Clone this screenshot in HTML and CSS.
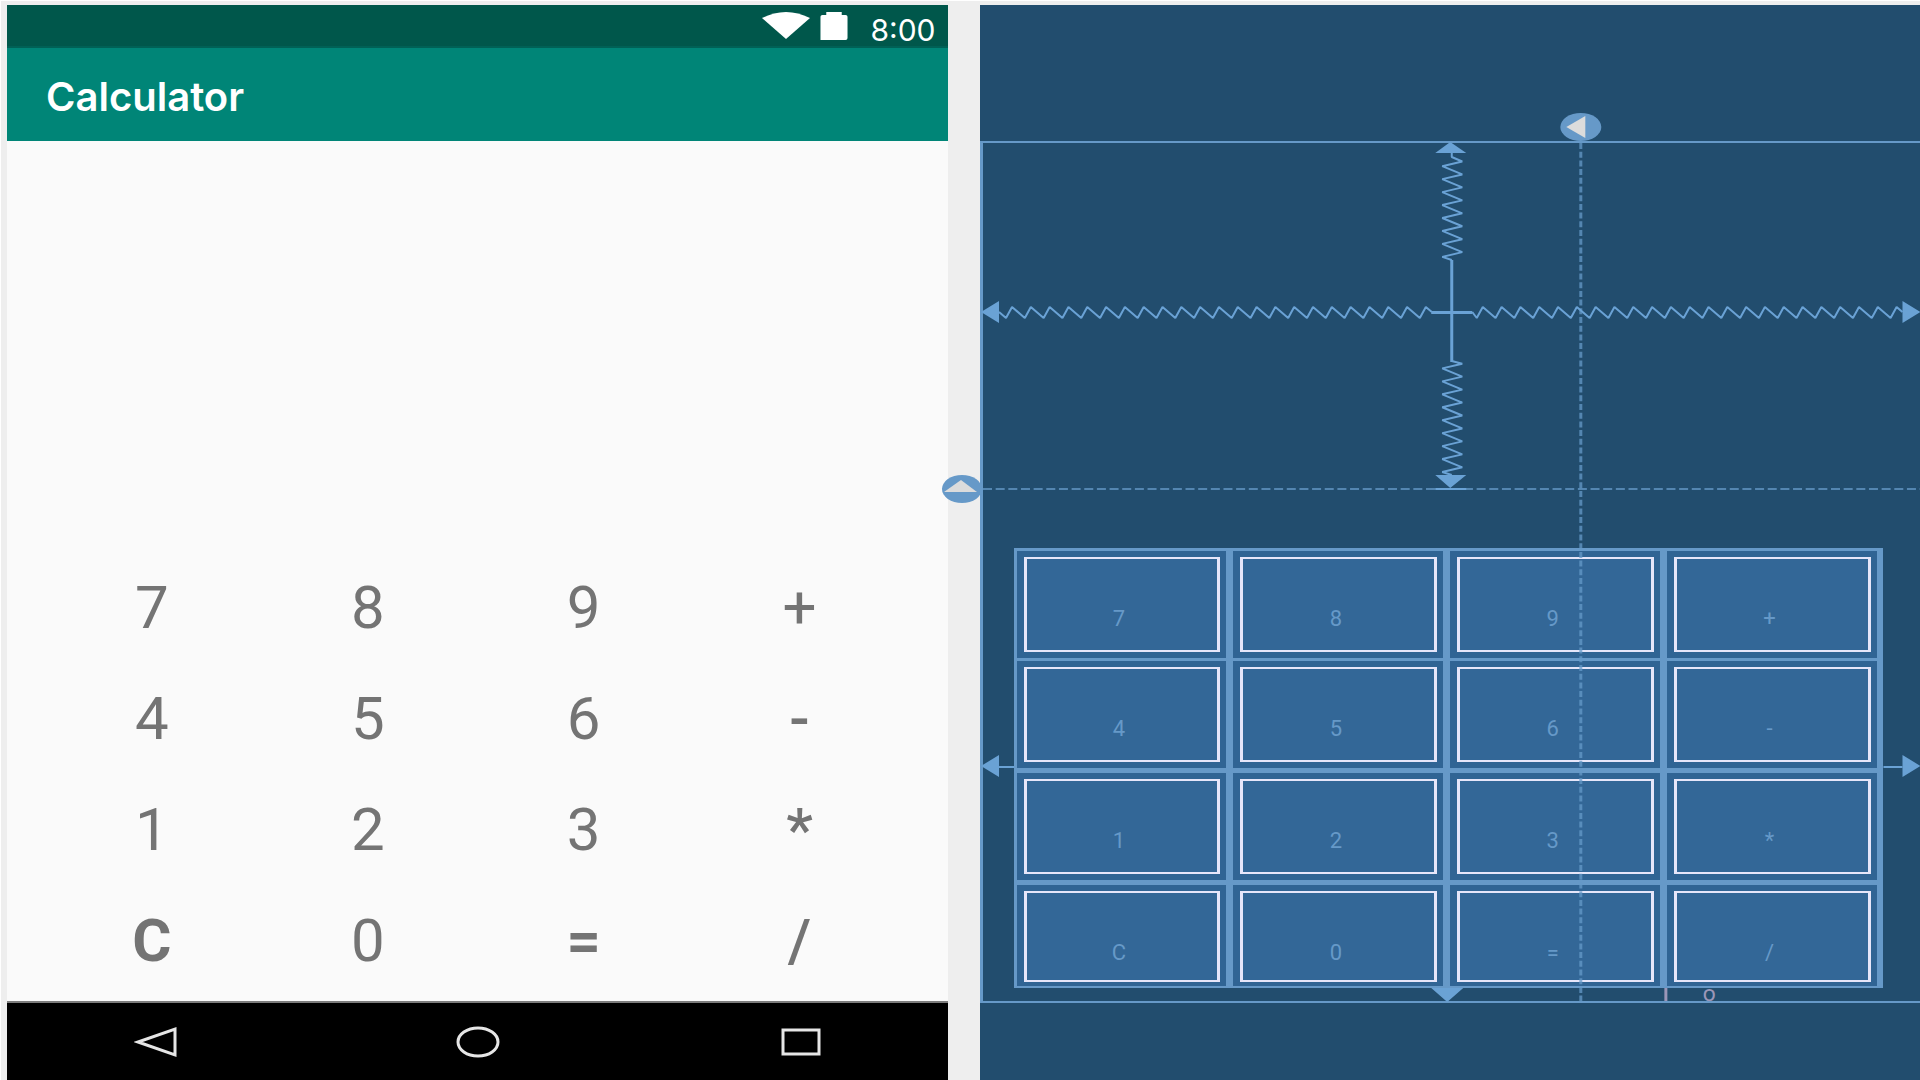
FILE: index.html
```html
<!DOCTYPE html>
<html lang="en">
<head>
<meta charset="utf-8">
<meta name="viewport" content="width=device-width, initial-scale=1">
<title>Calculator</title>
<link rel="stylesheet" href="styles.css">
</head>
<body>
<main class="editor">
  <section class="phone" aria-label="Design preview">
    <div class="status-bar">
      <svg class="wifi" viewBox="0 0 50 27" preserveAspectRatio="none" aria-hidden="true"><path d="M0 6Q25-6 50 6L25 27Z"/></svg>
      <svg class="battery" viewBox="0 0 28 29" aria-hidden="true"><path d="M6 0H22V3H26Q28 3 28 5V27Q28 29 26 29H0V5Q0 3 2 3H6Z"/></svg>
      <span class="clock">8:00</span>
    </div>
    <header class="app-bar"><h1 class="app-title">Calculator</h1></header>
    <div class="screen">
      <div class="keypad">
        <button class="key">7</button><button class="key">8</button><button class="key">9</button><button class="key">+</button>
        <button class="key">4</button><button class="key">5</button><button class="key">6</button><button class="key key-medium">-</button>
        <button class="key">1</button><button class="key">2</button><button class="key">3</button><button class="key key-medium">*</button>
        <button class="key key-bold">C</button><button class="key">0</button><button class="key key-bold">=</button><button class="key key-medium">/</button>
      </div>
    </div>
    <nav class="nav-bar" aria-label="System navigation">
      <button class="nav-button" aria-label="Back"><svg viewBox="0 0 44 32"><path d="M41 3V29L4 16Z"/></svg></button>
      <button class="nav-button" aria-label="Home"><svg viewBox="0 0 44 32"><ellipse cx="22" cy="16" rx="20" ry="14"/></svg></button>
      <button class="nav-button" aria-label="Overview"><svg viewBox="0 0 44 32"><path d="M4 4H40V28H4Z"/></svg></button>
    </nav>
  </section>

  <section class="blueprint" aria-label="Blueprint">
    <div class="surface">
      <div class="blocks">
        <div class="block"><span class="face">7</span></div><div class="block"><span class="face">8</span></div><div class="block"><span class="face">9</span></div><div class="block"><span class="face">+</span></div>
        <div class="block wide-gap"><span class="face">4</span></div><div class="block wide-gap"><span class="face">5</span></div><div class="block wide-gap"><span class="face">6</span></div><div class="block wide-gap"><span class="face">-</span></div>
        <div class="block wide-gap"><span class="face">1</span></div><div class="block wide-gap"><span class="face">2</span></div><div class="block wide-gap"><span class="face">3</span></div><div class="block wide-gap"><span class="face">*</span></div>
        <div class="block last-row"><span class="face">C</span></div><div class="block last-row"><span class="face">0</span></div><div class="block last-row"><span class="face">=</span></div><div class="block last-row"><span class="face">/</span></div>
      </div>
      <svg class="constraints" viewBox="0 0 940 862" preserveAspectRatio="none" aria-hidden="true">
        <!-- guidelines -->
        <path class="guide" stroke-width="3" stroke-dasharray="6 2.7" d="M600.5 2V860"/>
        <path class="guide" stroke-width="2" stroke-dasharray="9 3.65" d="M3 348H940"/>
        <ellipse class="badge" cx="600.5" cy="-14" rx="20.5" ry="14"/>
        <path class="badge-arrow" d="M586-14L605-25V-3Z"/>
        <ellipse class="badge" cx="-18" cy="348" rx="20" ry="14"/>
        <path class="badge-arrow" d="M-36 351L-19 339L-3 351Z"/>
        <!-- horizontal springs -->
        <path class="spring" d="M19 171L26 177l6-11 12.8 11 6-11 12.8 11 6-11 12.8 11 6-11 12.8 11 6-11 12.8 11 6-11 12.8 11 6-11 12.8 11 6-11 12.8 11 6-11 12.8 11 6-11 12.8 11 6-11 12.8 11 6-11 12.8 11 6-11 12.8 11 6-11 12.8 11 6-11 12.8 11 6-11 12.8 11 6-11 12.8 11 6-11 12.8 11 6-11 12.8 11 6-11 12.8 11 6-11 12.8 11 6-11 12.8 11 6-11 6 5"/>
        <path class="spring" d="M492 171l4.500 6 6-11 12.8 11 6-11 12.8 11 6-11 12.8 11 6-11 12.8 11 6-11 12.8 11 6-11 12.8 11 6-11 12.8 11 6-11 12.8 11 6-11 12.8 11 6-11 12.8 11 6-11 12.8 11 6-11 12.8 11 6-11 12.8 11 6-11 12.8 11 6-11 12.8 11 6-11 12.8 11 6-11 12.8 11 6-11 12.8 11 6-11 12.8 11 6-11 12.8 11 6-11 12.8 11 6-11 12.8 11 6-11L922 171"/>
        <!-- vertical springs -->
        <path class="spring" d="M471.500 12V16L482 20.500l-20 4.700 20 8.250-20 4.700 20 8.250-20 4.700 20 8.250-20 4.700 20 8.250-20 4.700 20 8.250-20 4.700 20 8.250-20 4.700 20 8.250-20 4.700L471.500 119"/>
        <path class="spring" d="M471.500 220L482 222.700l-20 4.700 20 8.250-20 4.700 20 8.250-20 4.700 20 8.250-20 4.700 20 8.250-20 4.700 20 8.250-20 4.700 20 8.250-20 4.700 20 8.250-20 4.700 20 8.250-20 4.700L471.500 334"/>
        <path class="line" stroke-width="3" d="M471.500 119V221M451 171.500H492"/>
        <path class="line" stroke-width="2" d="M455 348H486M19 626H34M903 626H922"/>
        <!-- anchors -->
        <path class="anchor" d="M470 1L486 12H455ZM470 347L486 334H455ZM1 171L19 160V182ZM940 171L922 160V182ZM1 625L19 614V636ZM940 625L922 614V636ZM467 861L483 847H451Z"/>
        <path class="stray" d="M685.500 847V860"/>
        <text class="stray-text" x="722" y="860">o</text>
      </svg>
    </div>
  </section>
</main>
</body>
</html>
```
FILE: styles.css
```css
*, *::before, *::after { box-sizing: border-box; }

:root {
  --line: #6699c8;
  --anchor: #6aa2d5;
  --paper: #224d6e;
}

body {
  margin: 0;
  font-family: Roboto, "Liberation Sans", sans-serif;
  background: #eeeeee;
}

button {
  margin: 0;
  padding: 0;
  border: 0;
  background: none;
  color: inherit;
  font: inherit;
}

.editor {
  display: grid;
  grid-template-columns: 1fr 1fr;
  gap: 32px;
  min-height: 100vh;
  padding: 4px 0 0 6px;
  border-top: 1px solid #ffffff;
  border-left: 1px solid #ffffff;
  overflow: hidden;
}

.phone, .blueprint {
  display: flex;
  flex-direction: column;
}

.phone { background: #fafafa; }

.status-bar {
  display: flex;
  align-items: center;
  justify-content: flex-end;
  gap: 10px;
  height: 43px;
  padding-right: 12px;
  background: #00574b;
  border-bottom: 2px solid #006156;
  color: #ffffff;
  fill: #ffffff;
}

.wifi { width: 48px; height: 27px; }
.battery { width: 28px; height: 28px; }

.clock {
  width: 78px;
  padding-top: 8px;
  font-family: Inter, Roboto, sans-serif;
  font-size: 30px;
  line-height: 32px;
  text-align: right;
}

.app-bar {
  display: flex;
  align-items: center;
  height: 93px;
  padding: 4px 0 0 39px;
  background: #008577;
  color: #ffffff;
}

.app-title {
  margin: 0;
  font-family: Inter, Roboto, sans-serif;
  font-size: 40px;
  line-height: 48px;
  font-weight: 600;
}

.screen {
  display: flex;
  flex: 1;
  flex-direction: column;
  justify-content: flex-end;
  padding: 0 40px 5px 37px;
}

.keypad {
  display: grid;
  grid-template-columns: repeat(4, 1fr);
  grid-auto-rows: 111px;
}

.key {
  color: #747474;
  font-size: 60px;
  line-height: 72px;
}

.key-medium { font-weight: 500; }
.key-bold { font-weight: 700; }

.nav-bar {
  display: flex;
  align-items: center;
  justify-content: space-between;
  height: 79px;
  padding: 0 125px 0 127px;
  background: #000000;
  border-top: 2px solid #7d7d7d;
}

.nav-button { height: 32px; }

.nav-button svg {
  display: block;
  width: 44px;
  height: 32px;
  fill: none;
  stroke: #e6e6e6;
  stroke-width: 3;
}

.blueprint {
  padding: 136px 0 77px;
  background: var(--paper);
}

.surface {
  position: relative;
  display: flex;
  flex: 1;
  flex-direction: column;
  justify-content: flex-end;
  padding: 0 37px 13px 31px;
  border: solid var(--line);
  border-width: 2px 0 2px 3px;
}

.blocks {
  display: grid;
  grid-template-columns: repeat(4, 1fr);
  column-gap: 7px;
  padding: 3px 6px 2px 3px;
  background: var(--line);
}

.block {
  display: flex;
  height: 110px;
  padding: 6px 6px 6px 7px;
  background: #306494;
  border-bottom: 3px solid var(--line);
}

.block.wide-gap {
  height: 112px;
  border-bottom-width: 5px;
}

.block.last-row {
  height: 101px;
  padding-bottom: 4px;
  border-bottom: 0;
}

.face {
  display: flex;
  flex: 1;
  align-items: center;
  justify-content: center;
  padding: 28px 6px 0 0;
  border: solid #e6e6fa;
  border-width: 2px 3px;
  background: #336797;
  color: var(--line);
  font-size: 22px;
  line-height: 24px;
}

.last-row .face { padding-top: 32px; }

.constraints {
  position: absolute;
  top: -2px;
  left: -3px;
  width: calc(100% + 3px);
  height: calc(100% + 4px);
  overflow: visible;
  pointer-events: none;
}

.guide, .line, .spring, .stray { fill: none; }
.guide { stroke: var(--line); opacity: 0.75; }
.line { stroke: var(--anchor); }
.spring { stroke: var(--anchor); stroke-width: 2; stroke-linejoin: bevel; }
.anchor { fill: var(--anchor); }
.badge { fill: var(--line); }
.badge-arrow { fill: #dcdcdc; }
.stray { stroke: #9b96b8; stroke-width: 3; }
.stray-text { fill: #9b96b8; font: 22px "DejaVu Sans", sans-serif; }
```
